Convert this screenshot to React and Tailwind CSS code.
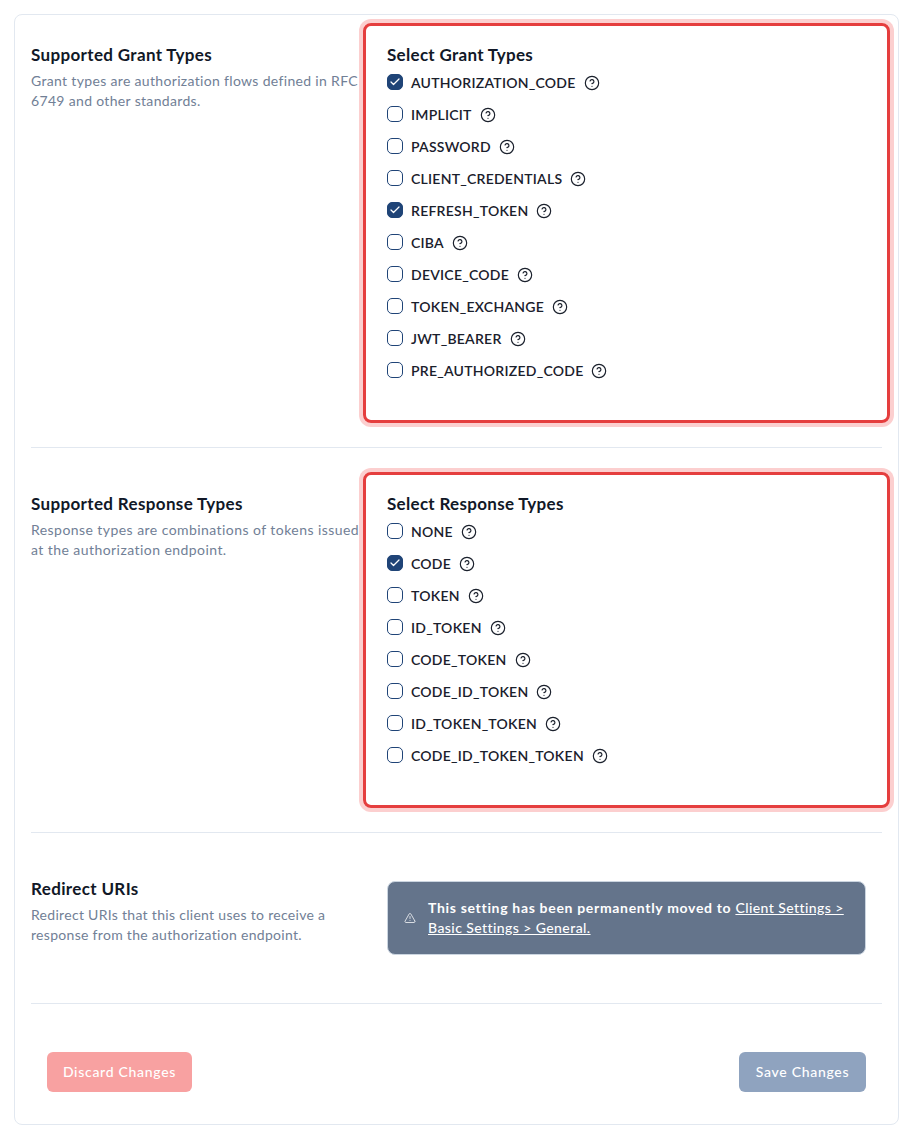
import { Check, CircleHelp, TriangleAlert } from 'lucide-react'

const GRANT_TYPES = [
  ['AUTHORIZATION_CODE', true],
  ['IMPLICIT', false],
  ['PASSWORD', false],
  ['CLIENT_CREDENTIALS', false],
  ['REFRESH_TOKEN', true],
  ['CIBA', false],
  ['DEVICE_CODE', false],
  ['TOKEN_EXCHANGE', false],
  ['JWT_BEARER', false],
  ['PRE_AUTHORIZED_CODE', false],
]

const RESPONSE_TYPES = [
  ['NONE', false],
  ['CODE', true],
  ['TOKEN', false],
  ['ID_TOKEN', false],
  ['CODE_TOKEN', false],
  ['CODE_ID_TOKEN', false],
  ['ID_TOKEN_TOKEN', false],
  ['CODE_ID_TOKEN_TOKEN', false],
]

function Intro({ title, spacing, children }) {
  return (
    <div className="w-[332px] shrink-0 pt-5">
      <h2 className="text-[17px] leading-6 font-bold tracking-[0.35px] text-[#111827]">{title}</h2>
      <p className={`mt-1 text-sm leading-5 text-[#718096] ${spacing}`}>{children}</p>
    </div>
  )
}

function CheckRow({ label, checked }) {
  return (
    <div className="flex h-8 items-center">
      <span
        className={[
          'mb-0.5 flex h-4 w-4 shrink-0 items-center justify-center rounded-[5px] border',
          checked ? 'border-[#1f4477] bg-[#1f4477]' : 'border-[#1f4477] bg-white',
        ].join(' ')}
      >
        {checked && <Check size={12} strokeWidth={2.5} className="text-white" />}
      </span>
      <span className="ml-2 text-sm leading-5 font-semibold tracking-[0.25px] text-[#1a202c]">{label}</span>
      <CircleHelp size={16} strokeWidth={1.75} className="ml-2 text-[#1a202c]" />
    </div>
  )
}

function ErrorBox({ title, options, className }) {
  return (
    <div
      className={[
        'w-[527px] shrink-0 rounded-lg border-[3px] border-[#e53e3e] pl-[21px] pt-[17px] ring-4 ring-[#fccfcf]',
        className,
      ].join(' ')}
    >
      <h3 className="text-[17px] leading-6 font-bold tracking-[0.3px] text-[#111827]">{title}</h3>
      <div className="flex flex-col">
        {options.map(([label, checked]) => (
          <CheckRow key={label} label={label} checked={checked} />
        ))}
      </div>
    </div>
  )
}

export default function App() {
  return (
    <div className="bg-white p-3.5 font-['Lato',sans-serif]">
      <div className="rounded-lg border border-[#e2e8f0] bg-white px-4 pb-8">
        <section className="flex border-b border-[#e2e8f0] pb-6 pt-2">
          <Intro title="Supported Grant Types" spacing="tracking-[0.33px]">
            Grant types are authorization flows defined in RFC<br />6749 and other standards.
          </Intro>
          <ErrorBox title="Select Grant Types" options={GRANT_TYPES} className="h-[400px]" />
        </section>

        <section className="flex border-b border-[#e2e8f0] py-6">
          <Intro title="Supported Response Types" spacing="tracking-[0.44px]">
            Response types are combinations of tokens issued<br />at the authorization endpoint.
          </Intro>
          <ErrorBox title="Select Response Types" options={RESPONSE_TYPES} className="h-[336px]" />
        </section>

        <section className="flex border-b border-[#e2e8f0] py-6">
          <Intro title="Redirect URIs" spacing="tracking-[0.3px]">
            Redirect URIs that this client uses to receive a<br />response from the authorization endpoint.
          </Intro>
          <div className="flex-1 py-6 pl-6 pr-4">
            <div className="flex h-[74px] items-center rounded-lg border border-[#cbd5e0] bg-[#64748b] pl-4 pr-4">
              <TriangleAlert size={12} strokeWidth={1.5} className="shrink-0 text-white" />
              <p className="ml-3 text-sm leading-5 font-bold tracking-[0.68px] text-white">
                This setting has been permanently moved to{' '}
                <span className="font-medium tracking-[0.42px] underline">Client Settings &gt;<br />Basic Settings &gt; General.</span>
              </p>
            </div>
          </div>
        </section>

        <div className="flex justify-between px-4 pt-12">
          <button type="button" className="h-10 w-[145px] rounded-md bg-[#f8a1a1] text-sm font-medium tracking-[0.7px] text-white">
            Discard Changes
          </button>
          <button type="button" className="h-10 w-[127px] rounded-md bg-[#8fa3bf] text-sm font-medium tracking-[0.7px] text-white">
            Save Changes
          </button>
        </div>
      </div>
    </div>
  )
}
